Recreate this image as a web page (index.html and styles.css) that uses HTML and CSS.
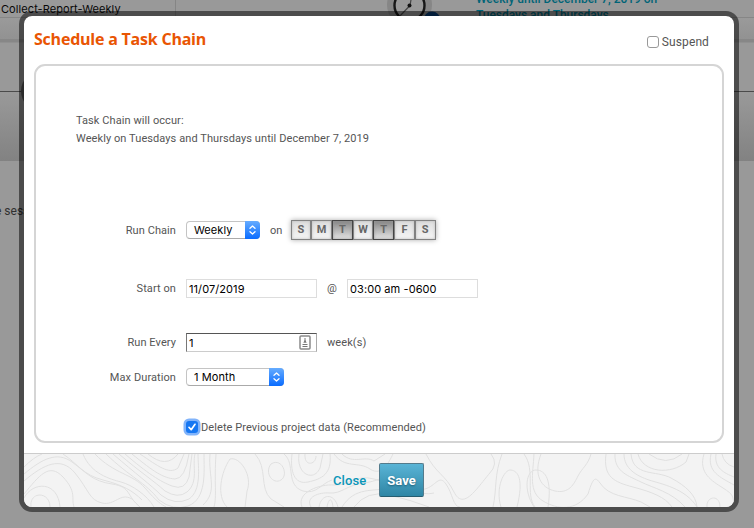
FILE: index.html
```
<!DOCTYPE html>
<html lang="en">
<head>
<meta charset="utf-8">
<title>Schedule a Task Chain</title>
<link rel="stylesheet" href="styles.css">
</head>
<body>
<div class="page">
  <div class="page-name"><span>Collect-Report-Weekly</span></div>
  <div class="page-toolbar"></div>
  <div class="page-rule"></div>
  <div class="page-track"></div>
  <div class="page-shade"></div>
  <div class="page-note">e sess</div>
  <div class="node"></div>
  <svg class="clock" width="60" height="40" viewBox="0 0 60 40">
    <circle cx="22.500" cy="15" r="22.500" fill="#868686"/>
    <circle cx="22.500" cy="15.500" r="15" fill="#999" stroke="#171717" stroke-width="2.400"/>
    <path d="M23 15.500 25 4M22.500 16 12 27" stroke="#444" stroke-width="1.200"/>
    <circle cx="22.500" cy="15.500" r="2" fill="#111"/>
    <circle cx="45" cy="30" r="8.500" fill="#073a73"/>
  </svg>
  <div class="summary">Weekly until December 7, 2019 on<br>Tuesdays and Thursdays</div>
</div>

<div class="modal">
  <header class="head">
    <h1>Schedule a Task Chain</h1>
    <label class="suspend"><span class="box"></span>Suspend</label>
  </header>
  <section class="panel">
    <div class="occurs"><p>Task Chain will occur:</p><p class="when">Weekly on Tuesdays and Thursdays until December 7, 2019</p></div>
    <div class="row run">
      <span class="label">Run Chain</span>
      <span class="select weekly"><span class="value">Weekly</span><span class="arrows"><svg width="9" height="12" viewBox="0 0 9 12"><path d="M2 4.300 4.500 2 7 4.300M2 7.700 4.500 10 7 7.700"/></svg></span></span>
      <span class="on">on</span>
      <span class="days"><b>S</b><b>M</b><b class="active">T</b><b>W</b><b class="active">T</b><b>F</b><b>S</b></span>
    </div>
    <div class="row start">
      <span class="label">Start on</span>
      <span class="input">11/07/2019</span>
      <span class="at">@</span>
      <span class="input">03:00 am -0600</span>
    </div>
    <div class="row every">
      <span class="label">Run Every</span>
      <span class="input inset">1<svg class="card" width="12" height="15" viewBox="0 0 12 15"><rect x="1" y="1" width="10" height="13" rx="1" fill="#fff" stroke="#8a8a8a" stroke-width="1.500"/><path d="M6 3v4M3.500 9.500h5M3.500 11.500h5" stroke="#777"/><path d="M4.300 7.800h3.400L6 4.800z" fill="#777"/></svg></span>
      <span class="unit">week(s)</span>
    </div>
    <div class="row duration">
      <span class="label">Max Duration</span>
      <span class="select month"><span class="value">1 Month</span><span class="arrows"><svg width="9" height="12" viewBox="0 0 9 12"><path d="M2 4.300 4.500 2 7 4.300M2 7.700 4.500 10 7 7.700"/></svg></span></span>
    </div>
    <div class="row delete">
      <span class="checked"><svg width="12" height="12" viewBox="0 0 12 12"><path d="M3 6.300 5.200 8.700 9 3.300"/></svg></span>
      <span class="delete-text">Delete Previous project data (Recommended)</span>
    </div>
  </section>
  <footer class="foot">
    <svg class="contours" width="710" height="53" viewBox="0 0 710 53">
      <path d="M0 13Q10 3 18 0M0 20C18 5 33-3 48 8S68 27 88 30S102 42 116 53M0 27C20 10 37 2 51 19S65 46 78 49S96 38 108 45L116 53M0 40C15 22 25 8 39 23S47 44 50 53M0 44C9 27 34 27 36 53M7 53C5 37 26 37 26 53M59 0C67 20 86 25 97 28S123 41 130 53M71 0C90 20 109 20 121 34S137 50 142 53M39 0C54 10 59 21 79 26S109 37 118 46"/>
      <path d="M82 0C107 24 121 28 135 46Q149 57 164 52C183 45 180 17 180 0M89 0C112 20 127 31 137 41Q151 52 165 45C178 36 174 13 174 0M95 0C116 18 130 27 141 37Q154 45 163 38C175 28 168 11 171 0M101 0C123 19 137 28 148 32Q161 37 165 23L168 0M108 0C130 18 139 24 151 25Q161 25 165 0M116 0C134 12 145 21 154 14L160 0M124 0Q142 15 154 0M186 0C184 23 194 37 179 51M192 0C190 29 193 42 190 53"/>
      <path d="M206 5C197 18 192 42 203 53M206 5C216 2 229 22 223 37L221 53M231 0C244 14 235 34 247 45L260 53M247 10C258 3 265 21 257 26S240 19 247 10M260 0C272 10 261 31 279 37C292 41 298 29 308 26M268 0C266 17 270 31 284 28S308 20 306 0M275 0C272 21 290 28 296 14L299 0M281 0C280 13 292 11 292 2M310 0C321 15 334 7 346 15S365 8 369 0M318 0C329 11 341 1 350 7L361 0"/>
      <path d="M278 53C272 38 296 30 310 31S332 20 350 25S390 38 401 35S415 20 422 30S429 53 436 53M287 53C281 43 295 38 306 39S323 31 340 29S361 18 382 28M295 53C297 40 310 38 314 53M303 53C305 43 308 44 309 53M318 53C331 32 350 38 365 34S397 43 410 39M330 53Q343 36 365 41T405 53M402 0C412 20 421 20 430 38S451 37 465 20Q475 10 467 0M478 0C470 21 473 35 469 53"/>
      <path d="M477 53C471 34 480 15 487 16S500 25 493 53M510 53C499 36 502 16 512 16S528 27 524 53M500 0C512 16 501 41 511 53M510 0C509 20 504 38 519 47S552 57 564 40C569 24 571 22 576 29C585 43 603 42 617 48L626 53M517 0C509 21 517 34 531 37S550 30 554 22S564 11 567 0M582 0C579 23 590 28 609 33S641 43 648 53M591 0C590 18 605 22 617 28S648 38 661 53M600 0C600 15 613 22 625 26S661 34 673 53M607 0C609 23 632 16 647 24S672 41 673 53M614 0C619 19 647 21 662 8L665 0M625 0Q642 13 658 0"/>
      <path d="M680 0C674 19 688 27 699 34S709 42 710 53M687 0C683 18 696 23 710 31M692 0C690 14 700 19 710 23M698 0Q700 10 710 13M683 53C682 42 696 40 696 53"/>
    </svg>
    <span class="close">Close</span>
    <span class="save">Save</span>
  </footer>
</div>
</body>
</html>
```
FILE: styles.css
```
* { box-sizing: border-box; }
body { margin: 0; width: 754px; height: 528px; overflow: hidden; font-family: Roboto, sans-serif; font-size: 11px; color: #555; }
.page { position: relative; height: 528px; background: #999; overflow: hidden; }
.page-name { height: 18px; border-bottom: 1px solid #868686; font: 11px/18px Inter, sans-serif; color: #080808; }
.page-name span { display: block; width: 176px; height: 17px; padding-left: 1px; border-right: 1px solid #858585; letter-spacing: .08px; white-space: nowrap; }
.page-toolbar { height: 21px; background: linear-gradient(#9a9a9a, #929292); }
.page-rule { height: 4px; background: #878787; border-bottom: 1px solid #909090; }
.page-track { height: 49px; border-bottom: 1px solid #4b4b4b; }
.page-shade { height: 69px; background: linear-gradient(#999, #969696 15%, #828282); }
.page-note { padding-top: 43px; margin-left: -5px; color: #303030; font-size: 12px; line-height: 14px; }
.node { position: absolute; left: 20.500px; top: 70px; width: 42px; height: 42px; border-radius: 50%; background: #555; }
.clock { position: absolute; left: 387px; top: -10px; }
.summary { position: absolute; left: 476px; top: -8px; color: #006477; font-size: 12px; font-weight: 500; line-height: 15.500px; letter-spacing: -.02px; white-space: nowrap; }

.modal { position: absolute; left: 19px; top: 11px; width: 720px; height: 501px; border: 5px solid rgba(0, 0, 0, .5); border-radius: 13px; background: #fff; background-clip: padding-box; display: flex; flex-direction: column; }
.head { display: flex; justify-content: space-between; height: 48px; padding: 12px 25px 0 10px; }
h1 { margin: 0; color: #e95503; font: 700 16px/22px "Open Sans", sans-serif; letter-spacing: -.22px; white-space: nowrap; }
.suspend { display: flex; align-items: center; height: 27px; font-size: 12px; letter-spacing: .1px; }
.box { width: 12px; height: 12px; margin-right: 3px; border: 1px solid #999; border-radius: 3px; }
.panel { flex: none; height: 379px; margin: 0 10px 10px; border: 2px solid #d5d5d5; border-radius: 11px; white-space: nowrap; font-weight: 400; letter-spacing: .08px; }
.occurs { height: 153px; padding: 46px 0 0 40px; line-height: 18px; }
.occurs p { margin: 0; }
.row { display: flex; align-items: center; height: 22px; }
.label { width: 140px; margin-right: 10px; text-align: right; }
.start { margin-top: 36px; }
.every { margin-top: 32px; }
.duration { margin-top: 13px; }
.delete { margin-top: 28px; padding-left: 150px; }
.select { display: flex; height: 18px; border: 1px solid #c4c4c4; border-bottom-color: #aaa; border-radius: 4px; background: #fff; color: #000; font: 11px/17px Inter, sans-serif; }
.value { flex: 1; padding-left: 7px; }
.arrows { display: flex; align-items: center; justify-content: center; width: 15px; margin: -1px -1px -1px 0; border-radius: 0 4px 4px 0; background: linear-gradient(#66acff, #0a6cff); }
.arrows path { fill: none; stroke: #fff; stroke-width: 1.300; stroke-linecap: round; stroke-linejoin: round; }
.weekly { width: 74px; }
.month { width: 98px; }
.on { margin: 0 8px 0 10px; }
.days { display: flex; width: 145px; height: 20px; box-shadow: 0 0 5px #aaa; }
.days b { flex: 1; border: 1px solid #828282; background: linear-gradient(#ddd, #f5f5f5); box-shadow: inset 0 0 3px #bbb; color: #666; font: 700 11px/18px Roboto, sans-serif; text-align: center; letter-spacing: 0; }
.days .active { border-color: #444; background: linear-gradient(#858585, #e4e4e4); box-shadow: inset 0 0 3px #999; }
.input { display: flex; align-items: center; justify-content: space-between; width: 131px; height: 19px; padding: 2px 5px 0 2px; border: 1px solid #ddd; background: #fff; color: #000; font: 11px/16px Inter, sans-serif; }
.inset { border-color: #555 #aaa #ccc #777; }
.card { margin-top: -1px; }
.at { width: 30px; text-align: center; }
.unit { margin-left: 10px; }
.checked { display: flex; width: 12px; height: 12px; border-radius: 3px; background: #1677f2; box-shadow: 0 0 0 2.500px #82b4fa; }
.checked path { fill: none; stroke: #fff; stroke-width: 1.700; stroke-linecap: round; stroke-linejoin: round; }
.delete-text { margin-left: 3px; }
.foot { position: relative; display: flex; align-items: center; height: 54px; padding: 0 0 1px 309px; border-top: 1px solid #ccc; border-radius: 0 0 8px 8px; background: #f3f3f3; overflow: hidden; }
.contours { position: absolute; left: 0; top: 0; }
.contours path { fill: none; stroke: #e0e0e0; stroke-width: 1; }
.close, .save { position: relative; font-size: 13px; font-weight: 500; }
.close { width: 46px; color: #0a96b9; letter-spacing: .1px; }
.save { width: 45px; height: 34px; border: 1px solid #537b8c; border-bottom-color: #265d70; border-radius: 2px; background: linear-gradient(#59b4d6, #2f86a5); color: #fff; line-height: 33px; font-weight: 700; text-align: center; text-shadow: 0 1px 2px #205f78; }
```
